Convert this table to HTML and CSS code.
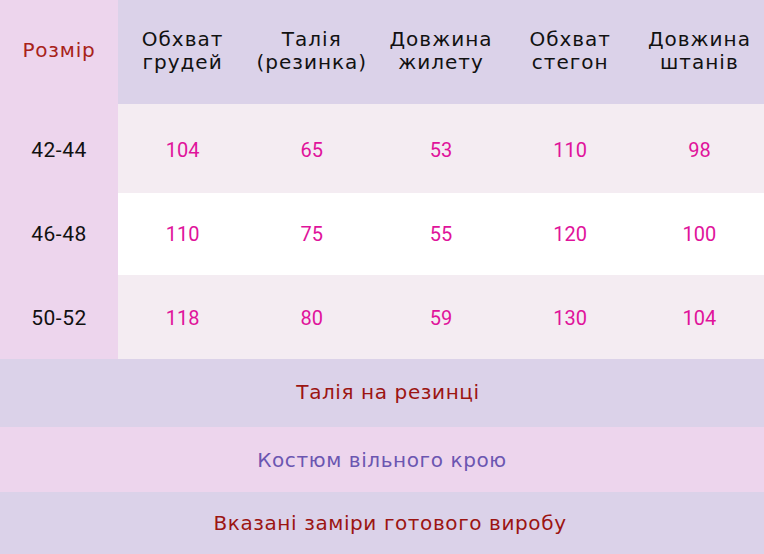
FILE: index.html
```
<!DOCTYPE html>
<html lang="uk">
<head>
<meta charset="utf-8">
<link rel="stylesheet" href="styles.css">
</head>
<body>
<div class="page">
  <div class="table">
    <div class="cell side head-side title">Розмір</div>
    <div class="cell head">Обхват<br>грудей</div>
    <div class="cell head">Талія<br>(резинка)</div>
    <div class="cell head">Довжина<br>жилету</div>
    <div class="cell head">Обхват<br>стегон</div>
    <div class="cell head">Довжина<br>штанів</div>

    <div class="cell side size r1">42-44</div>
    <div class="cell val alt r1">104</div>
    <div class="cell val alt r1">65</div>
    <div class="cell val alt r1">53</div>
    <div class="cell val alt r1">110</div>
    <div class="cell val alt r1">98</div>

    <div class="cell side size r2">46-48</div>
    <div class="cell val plain r2">110</div>
    <div class="cell val plain r2">75</div>
    <div class="cell val plain r2">55</div>
    <div class="cell val plain r2">120</div>
    <div class="cell val plain r2">100</div>

    <div class="cell side size r3">50-52</div>
    <div class="cell val alt r3">118</div>
    <div class="cell val alt r3">80</div>
    <div class="cell val alt r3">59</div>
    <div class="cell val alt r3">130</div>
    <div class="cell val alt r3">104</div>
  </div>
  <div class="band band-lav red">Талія на резинці</div>
  <div class="band band-pink purple">Костюм вільного крою</div>
  <div class="band band-lav3 red">Вказані заміри готового виробу</div>
</div>
</body>
</html>
```
FILE: styles.css
```
html, body {
  margin: 0;
  padding: 0;
  background: #ffffff;
}
.page {
  width: 764px;
  height: 554px;
  display: flex;
  flex-direction: column;
  font-family: "DejaVu Sans", "Noto Sans", sans-serif;
}
.table {
  display: grid;
  grid-template-columns: 118px repeat(5, 1fr);
  grid-template-rows: 104px 89px 82px 84px;
}
.cell {
  display: flex;
  align-items: center;
  justify-content: center;
  text-align: center;
}
.side {
  background: #edd5ed;
}
.head {
  background: #dbd2e9;
  color: #111111;
  font-size: 20px;
  line-height: 23px;
  letter-spacing: 1px;
  padding-bottom: 2px;
  white-space: nowrap;
}
.title {
  color: #a8231a;
  font-size: 20px;
  letter-spacing: 0.8px;
  padding-bottom: 4px;
}
.size {
  color: #111111;
  font-family: Roboto, "Noto Sans", sans-serif;
  font-size: 21px;
  letter-spacing: 0.5px;
}
.val {
  color: #e0139b;
  font-family: Roboto, "Noto Sans", sans-serif;
  font-size: 20px;
}
.r1 { padding-top: 2px; }
.r2 { padding-bottom: 0; }
.r3 { padding-top: 1px; }
.alt {
  background: #f4ecf2;
}
.plain {
  background: #ffffff;
}
.band {
  display: flex;
  align-items: center;
  justify-content: center;
  font-size: 20px;
  letter-spacing: 0.6px;
  box-sizing: border-box;
}
.band-lav {
  background: #dbd2e9;
  height: 68px;
  padding-bottom: 2px;
  padding-left: 12px;
}
.band-pink {
  background: #edd5ed;
  height: 65px;
}
.band-lav3 {
  background: #dbd2e9;
  flex: 1;
  padding-left: 16px;
}
.red {
  color: #9c1512;
}
.purple {
  color: #6b56b1;
}
```
